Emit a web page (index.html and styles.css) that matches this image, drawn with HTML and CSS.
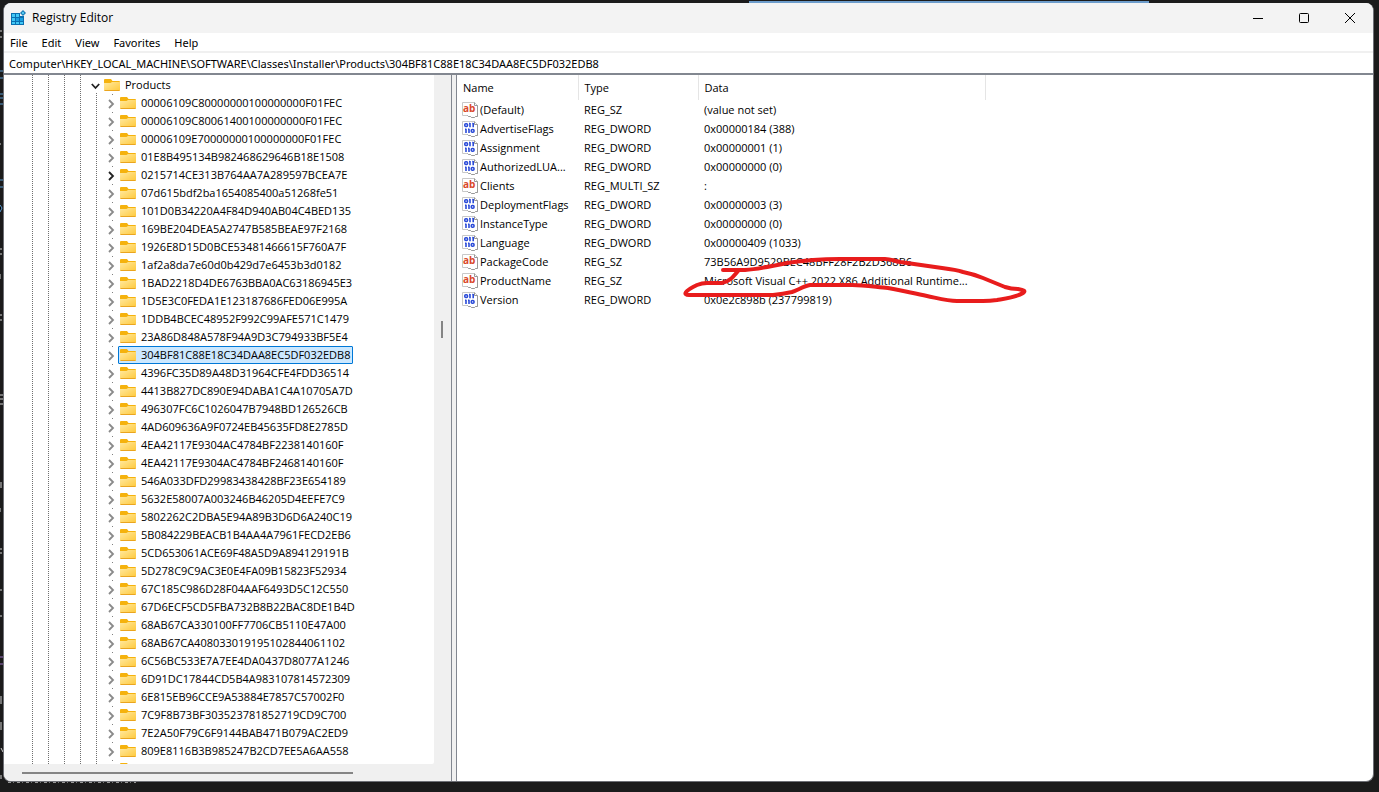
FILE: index.html
```
<!DOCTYPE html>
<html lang="en">
<head>
    <meta charset="UTF-8">
    <meta name="viewport" content="width=device-width, initial-scale=1.0">
    <title>Registry Editor</title>
    <link rel="stylesheet" href="styles.css">
</head>
<body>
    <svg class="sprites" aria-hidden="true">
        <defs>
            <linearGradient id="folderFill" x1="0" y1="0" x2="1" y2="1">
                <stop offset="0" stop-color="#ffe9a0"/>
                <stop offset="1" stop-color="#ffc93a"/>
            </linearGradient>
        </defs>
        <symbol id="folder" viewBox="0 0 16 14">
            <path d="M0 2a1 1 0 0 1 1-1h6l1.500 2H15a1 1 0 0 1 1 1v2H0z" fill="#f5b20d"/>
            <path d="M0 5h6.500L8 4h8v8a1 1 0 0 1-1 1H1a1 1 0 0 1-1-1z" fill="url(#folderFill)"/>
            <path d="M.5 12.500h15" stroke="#eaa51f"/>
        </symbol>
        <symbol id="closed" viewBox="0 0 9 10">
            <path d="M2 1l4 4-4 4" fill="none" stroke="currentColor" stroke-width="1.800"/>
        </symbol>
        <symbol id="open" viewBox="0 0 9 10">
            <path d="M.8 3l3.700 4 3.700-4" fill="none" stroke="currentColor" stroke-width="1.800"/>
        </symbol>
        <symbol id="page" viewBox="0 0 16 16">
            <path d="M.5.500h12l3 3v11h-2l-1 1h-3l-1-1h-2l-1-1h-5z" fill="#fff" stroke="#c8c8c8"/>
            <path d="M12.500.500v3h3v11h-2l-1 1h-3l-1-1h-2l-1-1" fill="none" stroke="#999"/>
        </symbol>
        <symbol id="binary" viewBox="0 0 16 16">
            <use href="#page"/>
            <g fill="none" stroke="#2b4bd8" stroke-width="1.600">
                <rect x="2.800" y="2.800" width="2.700" height="2.700" rx="1"/>
                <path d="M8 2v4.300M11.200 2v4.300M7 2.500h1M10.200 2.500h1M4 7.700V12M7 7.700V12M3 8.200h1M6 8.200h1"/>
                <rect x="9.300" y="8.500" width="2.700" height="2.700" rx="1"/>
            </g>
        </symbol>
    </svg>

    <!-- edges of the editor behind the window -->
    <div class="desktop" aria-hidden="true">
        <div class="top-line"></div>
        <svg class="left-marks">
            <path d="M0 31h2M0 37h2M0 144h1M0 249h2M0 254h2M0 274v5M0 315h2M0 320h2M0 395h3M0 399h3M0 404h3M1 482v6M0 508v4M0 549h2M0 553h2M0 590h2M0 616h2M1 696v8M1 722v8M1 748l2 4M1 775v4" stroke="#d0d0d0"/>
            <path d="M0 71h3M0 78h3M0 94h3M0 98h3M0 104h3M0 180h3M0 187h3M0 205l2 3-2 4" stroke="#5b9bd0"/>
            <path d="M0 657h3M0 664h3" stroke="#9a6fc0"/>
        </svg>
        <div class="bottom-marks"></div>
    </div>

    <main class="window">
        <header class="titlebar">
            <svg class="app-icon" viewBox="0 0 16 16">
                <path d="M1 3h9v3h4v9H1z" fill="#0a6fb0"/>
                <path d="M2 4h3v3H2zM6 4h3v3H6zM2 8h3v3H2zM6 8h3v3H6zM10 8h3v3h-3zM2 12h3v2H2zM6 12h3v2H6zM10 12h3v2h-3z" fill="#42c8f5"/>
                <path d="M6 8h3v3H6zM10 8h3v3h-3z" fill="#1b9fe0"/>
                <path d="M13 0l3 3-3 3-3-3z" fill="#1677b3"/>
                <path d="M13 1.500l1.500 1.500L13 4.500 11.500 3z" fill="#5ed3f7"/>
            </svg>
            <h1>Registry Editor</h1>
            <div class="window-buttons">
                <button aria-label="Minimize"><svg viewBox="0 0 12 12"><path d="M1 6.500h10"/></svg></button>
                <button aria-label="Maximize"><svg viewBox="0 0 12 12"><rect x="1.500" y="1.500" width="9" height="9" rx="1"/></svg></button>
                <button aria-label="Close"><svg viewBox="0 0 12 12"><path d="M1 1l10 10M11 1L1 11"/></svg></button>
            </div>
        </header>

        <nav class="menubar">
            <button>File</button>
            <button>Edit</button>
            <button>View</button>
            <button>Favorites</button>
            <button>Help</button>
        </nav>

        <input class="address" type="text" aria-label="Address" value="Computer\HKEY_LOCAL_MACHINE\SOFTWARE\Classes\Installer\Products\304BF81C88E18C34DAA8EC5DF032EDB8">

        <div class="panes">
            <section class="tree-pane">
                <div class="tree">
                    <div class="guides"><i></i><i></i><i></i><i></i><i></i></div>
                    <div class="branch">
                        <div class="parent">
                            <button class="toggle dark" aria-label="Collapse"><svg><use href="#open"/></svg></button>
                            <span class="key"><svg class="folder"><use href="#folder"/></svg>Products</span>
                        </div>
                        <ul id="keys"></ul>
                    </div>
                </div>
                <div class="scroll-y"><span></span></div>
                <div class="scroll-x"><span></span></div>
            </section>

            <section class="values-pane">
                <table>
                    <colgroup><col class="col-name"><col class="col-type"><col class="col-data"></colgroup>
                    <thead>
                        <tr><th>Name</th><th>Type</th><th>Data</th></tr>
                    </thead>
                    <tbody id="values"></tbody>
                </table>
                <svg class="marker" viewBox="0 0 346 46" aria-hidden="true">
                    <path d="M40 12h22C76 11 90 8 104 5q13-2 26-3 13-1 27-1h45c6 0 9 2 15 3l42 6c8 1 15 2 21 4q10 2 20 6l22 9q6 2 13 2c6 1 8 2 5 4-6 4-14 5-26 7q-7 1-14 1h-26c-10 0-20-3-30-5-15-3-27-6-39-8-12-1-24-3-36-3h-42c-6 1-12 5-18 7q-9 2-19 3H6c-6 0-5-4 8-10q5-2 10-2h15c7-1 11-6 16-12"/>
                </svg>
            </section>
        </div>
    </main>

    <script>
        var keys = [
            '00006109C80000000100000000F01FEC',
            '00006109C80061400100000000F01FEC',
            '00006109E70000000100000000F01FEC',
            '01E8B495134B982468629646B18E1508',
            '0215714CE313B764AA7A289597BCEA7E',
            '07d615bdf2ba1654085400a51268fe51',
            '101D0B34220A4F84D940AB04C4BED135',
            '169BE204DEA5A2747B585BEAE97F2168',
            '1926E8D15D0BCE53481466615F760A7F',
            '1af2a8da7e60d0b429d7e6453b3d0182',
            '1BAD2218D4DE6763BBA0AC63186945E3',
            '1D5E3C0FEDA1E123187686FED06E995A',
            '1DDB4BCEC48952F992C99AFE571C1479',
            '23A86D848A578F94A9D3C794933BF5E4',
            '304BF81C88E18C34DAA8EC5DF032EDB8',
            '4396FC35D89A48D31964CFE4FDD36514',
            '4413B827DC890E94DABA1C4A10705A7D',
            '496307FC6C1026047B7948BD126526CB',
            '4AD609636A9F0724EB45635FD8E2785D',
            '4EA42117E9304AC4784BF2238140160F',
            '4EA42117E9304AC4784BF2468140160F',
            '546A033DFD29983438428BF23E654189',
            '5632E58007A003246B46205D4EEFE7C9',
            '5802262C2DBA5E94A89B3D6D6A240C19',
            '5B084229BEACB1B4AA4A7961FECD2EB6',
            '5CD653061ACE69F48A5D9A894129191B',
            '5D278C9C9AC3E0E4FA09B15823F52934',
            '67C185C986D28F04AAF6493D5C12C550',
            '67D6ECF5CD5FBA732B8B22BAC8DE1B4D',
            '68AB67CA330100FF7706CB5110E47A00',
            '68AB67CA408033019195102844061102',
            '6C56BC533E7A7EE4DA0437D8077A1246',
            '6D91DC17844CD5B4A983107814572309',
            '6E815EB96CCE9A53884E7857C57002F0',
            '7C9F8B73BF303523781852719CD9C700',
            '7E2A50F79C6F9144BAB471B079AC2ED9',
            '809E8116B3B985247B2CD7EE5A6AA558',
            ''
        ];
        var selected = '304BF81C88E18C34DAA8EC5DF032EDB8';
        var hovered = '0215714CE313B764AA7A289597BCEA7E';

        document.getElementById('keys').innerHTML = keys.map(function (key) {
            return '<li><button class="toggle' + (key === hovered ? ' dark' : '') + '" aria-label="Expand"><svg><use href="#closed"/></svg></button>' +
                '<span class="key' + (key === selected ? ' selected' : '') + '"><svg class="folder"><use href="#folder"/></svg>' + key + '</span></li>';
        }).join('');

        var values = [
            ['(Default)', 'REG_SZ', '(value not set)'],
            ['AdvertiseFlags', 'REG_DWORD', '0x00000184 (388)'],
            ['Assignment', 'REG_DWORD', '0x00000001 (1)'],
            ['AuthorizedLUA...', 'REG_DWORD', '0x00000000 (0)'],
            ['Clients', 'REG_MULTI_SZ', ':'],
            ['DeploymentFlags', 'REG_DWORD', '0x00000003 (3)'],
            ['InstanceType', 'REG_DWORD', '0x00000000 (0)'],
            ['Language', 'REG_DWORD', '0x00000409 (1033)'],
            ['PackageCode', 'REG_SZ', '73B56A9D9529BEC48BFF28F2B2D368B6'],
            ['ProductName', 'REG_SZ', 'Microsoft Visual C++ 2022 X86 Additional Runtime...'],
            ['Version', 'REG_DWORD', '0x0e2c898b (237799819)']
        ];

        var binaryIcon = '<svg><use href="#binary"/></svg>';
        var stringIcon = '<svg><use href="#page"/><text x="1" y="10">ab</text></svg>';

        document.getElementById('values').innerHTML = values.map(function (row) {
            var icon = row[1] === 'REG_DWORD' ? binaryIcon : stringIcon;
            return '<tr><td><span class="value-name">' + icon + row[0] + '</span></td>' +
                '<td>' + row[1] + '</td><td>' + row[2] + '</td></tr>';
        }).join('');
    </script>
</body>
</html>
```
FILE: styles.css
```
* {
    box-sizing: border-box;
}

body {
    margin: 0;
    height: 100vh;
    padding: 3px 5px 10px 3px;
    background: #1b1b1b;
    font-family: "Open Sans", "Noto Sans", sans-serif;
    font-size: 11px;
    color: #000;
    overflow: hidden;
}

button {
    border: 0;
    padding: 0;
    background: none;
    font: inherit;
    color: inherit;
}

.sprites {
    position: absolute;
    width: 0;
    height: 0;
}

.desktop {
    position: absolute;
    inset: 0;
    z-index: -1;
}

.top-line {
    position: absolute;
    top: 1px;
    left: 749px;
    width: 400px;
    height: 2px;
    background: #6c9ccb;
}

.left-marks {
    position: absolute;
    top: 0;
    left: 0;
    width: 3px;
    height: 100%;
}

.bottom-marks {
    position: absolute;
    bottom: 9px;
    left: 8px;
    width: 128px;
    height: 1px;
    background: repeating-linear-gradient(90deg, #999 0 3px, #1b1b1b 3px 5px, #777 5px 6px, #1b1b1b 6px 9px);
}

.window {
    display: flex;
    flex-direction: column;
    height: 100%;
    background: #fff;
    border: 1px solid #6d6f75;
    border-top: 0;
    border-radius: 8px;
    overflow: hidden;
}

.titlebar {
    display: flex;
    align-items: center;
    height: 30px;
    padding-left: 6px;
    background: #f3f3f3;
    flex: none;
}

.app-icon {
    width: 16px;
    height: 16px;
}

.titlebar h1 {
    margin: 0 auto 0 6px;
    font-size: 12px;
    line-height: 16px;
    font-weight: 400;
}

.window-buttons {
    display: flex;
}

.window-buttons button {
    width: 46px;
    height: 28px;
}

.window-buttons svg {
    display: block;
    width: 12px;
    height: 12px;
    margin: 0 auto;
    fill: none;
    stroke: #000;
}

.menubar {
    display: flex;
    gap: 14px;
    height: 20px;
    padding: 0 6px;
    border-bottom: 2px solid #f0f0f0;
    flex: none;
}

.address {
    height: 20px;
    padding: 0 5px;
    border: 0;
    font: inherit;
    color: inherit;
    flex: none;
    outline: 0;
}

.menubar,
.address {
    font-family: "Noto Sans", "Open Sans", sans-serif;
}

.panes {
    display: flex;
    flex: 1;
    min-height: 0;
    border-top: 2px solid #828790;
}

.tree-pane {
    display: grid;
    grid-template: 1fr 17px / 1fr 17px;
    width: 448px;
    border-right: 1px solid #828790;
    background: #f0f0f0;
    flex: none;
}

.tree {
    display: flex;
    background: #fff;
    border-bottom-right-radius: 2px;
    overflow: hidden;
    min-height: 0;
}

.guides {
    display: flex;
    gap: 15px;
    padding-left: 28px;
}

.guides i {
    width: 1px;
    background: repeating-linear-gradient(#707070 0 1px, #fff 1px 2px);
}

.guides i:last-child {
    margin-top: 18px;
}

.branch {
    margin-left: -8px;
    padding-top: 1px;
    line-height: 18px;
    white-space: nowrap;
}

.parent,
.branch li {
    display: flex;
    height: 18px;
}

.branch ul {
    margin: 0;
    padding: 0 0 0 16px;
    list-style: none;
}

.toggle {
    display: flex;
    align-items: center;
    width: 13px;
    color: #8a8a8a;
}

.toggle.dark {
    color: #222;
}

.toggle svg {
    width: 9px;
    height: 10px;
    margin: 2px 2px 0;
}

.branch li .toggle {
    background: linear-gradient(#808080, #808080) 7px 0 / 1px 1px no-repeat;
}

.key {
    display: flex;
    align-items: center;
    gap: 5px;
    padding: 0 2px 0 1px;
    border: 1px solid transparent;
}

.key.selected {
    background: #cce8ff;
    border-color: #0078d7;
    border-radius: 1px;
}

.folder {
    width: 16px;
    height: 14px;
}

.scroll-y {
    display: flex;
    align-items: center;
    padding-left: 7px;
}

.scroll-y span {
    width: 2px;
    height: 17px;
    margin-bottom: 180px;
    background: #858585;
}

.scroll-x {
    display: flex;
    align-items: center;
    padding-left: 18px;
}

.scroll-x span {
    width: 331px;
    height: 2px;
    background: #858585;
}

.values-pane {
    position: relative;
    flex: 1;
    margin-left: 4px;
    border-left: 1px solid #828790;
    box-shadow: -4px 0 #f0f0f0;
}

table {
    table-layout: fixed;
    border-collapse: collapse;
    width: 529px;
}

.col-name {
    width: 121px;
}

.col-type {
    width: 120px;
}

th,
td {
    height: 19px;
    padding: 0 6px;
    font-weight: 400;
    text-align: left;
    white-space: nowrap;
}

th {
    height: 25px;
    border-right: 1px solid #e5e5e5;
}

td:first-child {
    padding: 0 0 0 5px;
}

.value-name {
    display: flex;
    align-items: center;
    gap: 2px;
}

.value-name svg {
    width: 16px;
    height: 16px;
}

.value-name text {
    font-size: 10px;
    font-weight: 700;
    fill: #d9482b;
}

/* hand-drawn circle over the product name */
.marker {
    position: absolute;
    top: 183px;
    left: 226px;
    width: 346px;
    height: 46px;
    overflow: visible;
    fill: none;
    stroke: #e81c1c;
    stroke-width: 4px;
    stroke-linecap: round;
    stroke-linejoin: round;
}
```
